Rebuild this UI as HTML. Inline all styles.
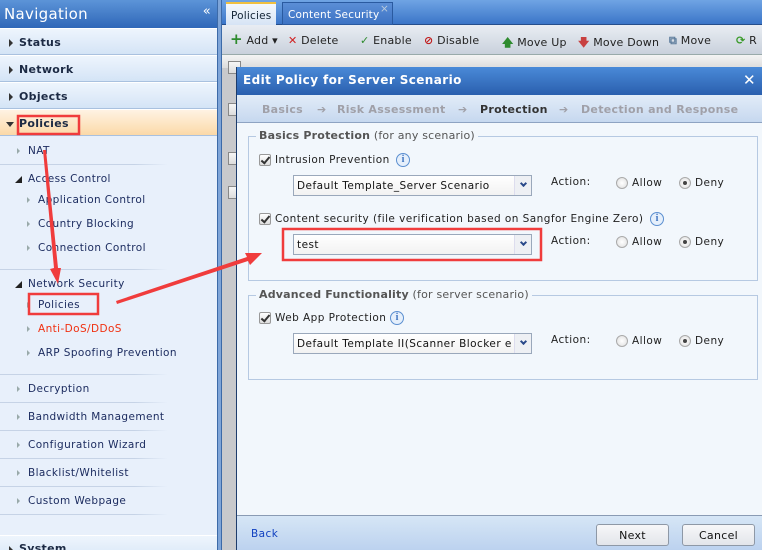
<!DOCTYPE html>
<html><head><meta charset="utf-8">
<style>
*{box-sizing:border-box;margin:0;padding:0}
html,body{width:762px;height:550px;overflow:hidden}
body{position:relative;font-family:"DejaVu Sans","Liberation Sans",sans-serif;font-size:10.5px;color:#1a1a3a;background:#c8c9cc}
.abs{position:absolute}
#side{left:0;top:0;width:217px;height:550px;background:#e8f0fb;overflow:hidden}
#navh{left:0;top:0;width:217px;height:28px;background:linear-gradient(#5c94d8,#2f67b8);color:#fff;font-size:15px;padding:5px 0 0 4px;letter-spacing:0.3px}
.grp{position:absolute;left:0;width:217px;height:27px;background:linear-gradient(#eef5fd,#d4e4f6);border-top:1px solid #fff;border-bottom:1px solid #a9c1df;font-weight:bold;font-size:11px;padding:7px 0 0 19px;color:#1c2a44;letter-spacing:0.3px}
.grp:before{content:"";position:absolute;left:9px;top:10px;border-left:4px solid #333;border-top:4px solid transparent;border-bottom:4px solid transparent}
.grp.open{background:linear-gradient(#fff3e3,#fbd9a8)}
.grp.open:before{left:6px;top:12px;border-top:5px solid #333;border-left:4px solid transparent;border-right:4px solid transparent;border-bottom:0}
.it{position:absolute;font-size:10.5px;color:#1a2a5e;letter-spacing:0.4px;white-space:nowrap}
.it.a:before{content:"";position:absolute;left:-11px;top:3px;border-left:3px solid #9aa;border-top:3px solid transparent;border-bottom:3px solid transparent}
.it.t:before{content:"";position:absolute;left:-13px;top:3px;border-right:7px solid #222;border-top:7px solid transparent}
.sep{position:absolute;left:0;width:168px;height:1px;background:linear-gradient(90deg,#c6d3e6,#c6d3e6 80%,rgba(198,211,230,0))}
#vbar{left:217px;top:0;width:5px;height:550px;background:#7fa5d8;border-left:1px solid #3c6aa8;border-right:1px solid #3c6aa8}
#tabs{left:222px;top:0;width:540px;height:25px;background:linear-gradient(#6fa4e4,#3b75c8);border-bottom:1px solid #254e8c}
.tab{position:absolute;top:2px;height:23px;padding:6px 5px 0;font-size:10.5px;letter-spacing:0.2px;white-space:nowrap}
#tool{left:222px;top:25px;width:540px;height:30px;background:linear-gradient(#e9edf3,#c9d1dc);border-bottom:1px solid #9aa}
.tb{position:absolute;top:9px;font-size:11px;color:#222;letter-spacing:0.2px;white-space:nowrap}
#gh{left:222px;top:55px;width:540px;height:13px;background:linear-gradient(#f4f4f4,#dcdcdc)}
.cb{position:absolute;width:13px;height:13px;border:1px solid #888;background:linear-gradient(#f5f5f5,#ddd)}
#dlg{left:236px;top:67px;width:526px;height:483px;background:#f2f7fc;border-left:1px solid #1d3c6c}
#dt{left:0;top:0;width:526px;height:28px;background:linear-gradient(#4a8ad8,#2a5fae);color:#fff;font-weight:bold;font-size:12px;padding:6px 0 0 6px;letter-spacing:0.4px}
#steps{left:0;top:28px;width:526px;height:28px;background:linear-gradient(#e2ecf8,#c6d8ef);border-bottom:1px solid #8ea3c2;font-weight:bold;font-size:11px;color:#a0a0a8;letter-spacing:0.3px}
#steps span{position:absolute;top:8px;white-space:nowrap}
fieldset{position:absolute;border:1px solid #b6c9e2}
.lg{position:absolute;background:#f2f7fc;padding:0 3px;font-size:11px;color:#555;letter-spacing:0.2px;white-space:nowrap}
.chk{position:absolute;width:12px;height:12px;border:1px solid #999;background:linear-gradient(#fff,#ddd);border-radius:2px}
.chk:after{content:"";position:absolute;left:3px;top:0px;width:3px;height:7px;border-right:2px solid #333;border-bottom:2px solid #333;transform:rotate(40deg)}
.lbl{position:absolute;font-size:10.5px;color:#222;letter-spacing:0.45px;white-space:nowrap}
.info{position:absolute;width:14px;height:14px;border-radius:50%;border:1px solid #5b8fd0;background:#e5effb;color:#3f74c0;font-size:10px;font-weight:bold;text-align:center;line-height:12px;font-family:"Liberation Serif",serif}
.sel{position:absolute;width:239px;height:21px;border:1px solid #9aa8bb;background:linear-gradient(#fff,#f2f2f2);font-size:10.5px;padding:4px 0 0 3px;letter-spacing:0.45px;color:#111;overflow:hidden;white-space:nowrap}
.sel:after{content:"";position:absolute;right:0;top:0;width:16px;height:19px;background:#eef0f4;border-left:1px solid #dde}
.sel i{position:absolute;right:5px;top:5px;width:5px;height:5px;border-right:2px solid #2a4a8a;border-bottom:2px solid #2a4a8a;transform:rotate(45deg);z-index:2}
.rad{position:absolute;width:12px;height:12px;border-radius:50%;border:1px solid #aaa;background:radial-gradient(#fff,#ddd)}
.rad.on:after{content:"";position:absolute;left:3px;top:3px;width:4px;height:4px;border-radius:50%;background:#444}
#foot{left:0;top:448px;width:526px;height:35px;background:linear-gradient(#d6e6f6,#bcd2ef);border-top:1px solid #8a9bb4}
.btn{position:absolute;top:8px;width:73px;height:22px;border:1px solid #8e98a6;border-radius:3px;background:linear-gradient(#f7f7f9,#e3e5ea);font-size:11px;text-align:center;padding-top:4px;color:#111;letter-spacing:0.3px}
</style></head><body>
<div id="side" class="abs">
<div id="navh" class="abs">Navigation<span style="position:absolute;right:6px;top:4px;font-size:13px">«</span></div>
<div class="grp" style="top:28px">Status</div>
<div class="grp" style="top:55px">Network</div>
<div class="grp" style="top:82px">Objects</div>
<div class="grp open" style="top:109px">Policies</div>
<div class="it a" style="left:28px;top:145px">NAT</div>
<div class="sep" style="top:164px"></div>
<div class="it t" style="left:28px;top:173px">Access Control</div>
<div class="it a" style="left:38px;top:194px">Application Control</div>
<div class="it a" style="left:38px;top:218px">Country Blocking</div>
<div class="it a" style="left:38px;top:242px">Connection Control</div>
<div class="sep" style="top:269px"></div>
<div class="it t" style="left:28px;top:278px">Network Security</div>
<div class="it a" style="left:38px;top:299px">Policies</div>
<div class="it a" style="left:38px;top:323px;color:#f03010">Anti-DoS/DDoS</div>
<div class="it a" style="left:38px;top:347px">ARP Spoofing Prevention</div>
<div class="sep" style="top:374px"></div>
<div class="it a" style="left:28px;top:383px">Decryption</div>
<div class="sep" style="top:402px"></div>
<div class="it a" style="left:28px;top:411px">Bandwidth Management</div>
<div class="sep" style="top:430px"></div>
<div class="it a" style="left:28px;top:439px">Configuration Wizard</div>
<div class="sep" style="top:458px"></div>
<div class="it a" style="left:28px;top:467px">Blacklist/Whitelist</div>
<div class="sep" style="top:486px"></div>
<div class="it a" style="left:28px;top:495px">Custom Webpage</div>
<div class="sep" style="top:514px"></div>
<div class="grp" style="top:535px;height:30px;padding-top:6px">System</div>
</div>
<div id="vbar" class="abs"></div>
<div id="tabs" class="abs">
<div class="tab" style="left:4px;width:50px;background:linear-gradient(#f4f8fd,#d6e4f5);border-top:2px solid #f0c040;color:#123">Policies</div>
<div class="tab" style="left:60px;width:111px;background:linear-gradient(#5b8ed6,#3d73c4);border:1px solid #2a5aa0;color:#fff">Content Security<span style="position:absolute;right:3px;top:0px;color:#bcd">×</span></div>
</div>
<div id="tool" class="abs">
<div class="tb" style="left:8px"><b style="color:#2e8b2e;font-size:15px;line-height:10px">+</b> Add ▾</div>
<div class="tb" style="left:66px"><b style="color:#d02020">✕</b> Delete</div>
<div class="tb" style="left:138px"><b style="color:#2e8b2e">✓</b> Enable</div>
<div class="tb" style="left:202px"><b style="color:#c01818">⊘</b> Disable</div>
<div class="tb" style="left:280px"><b style="color:#2e8b2e">🡅</b> Move Up</div>
<div class="tb" style="left:356px"><b style="color:#c84040">🡇</b> Move Down</div>
<div class="tb" style="left:447px"><b style="color:#5a7a9a">⧉</b> Move</div>
<div class="tb" style="left:514px"><b style="color:#3a9a2a">⟳</b> R</div>
</div>
<div id="gh" class="abs"></div>
<div class="cb" style="left:228px;top:61px"></div>
<div class="cb" style="left:228px;top:103px"></div>
<div class="cb" style="left:228px;top:152px"></div>
<div class="cb" style="left:228px;top:186px"></div>
<div id="dlg" class="abs">
<div id="dt" class="abs">Edit Policy for Server Scenario<span style="position:absolute;right:7px;top:4px;font-size:15px">✕</span></div>
<div id="steps" class="abs">
<span style="left:25px">Basics</span><span style="left:80px">➔</span>
<span style="left:100px">Risk Assessment</span><span style="left:221px">➔</span>
<span style="left:243px;color:#333">Protection</span><span style="left:322px">➔</span>
<span style="left:344px">Detection and Response</span>
</div>
<fieldset style="left:11px;top:69px;width:510px;height:145px"></fieldset>
<div class="lg" style="left:19px;top:62px"><b>Basics Protection</b> (for any scenario)</div>
<div class="chk" style="left:22px;top:87px"></div>
<div class="lbl" style="left:38px;top:87px">Intrusion Prevention</div>
<div class="info" style="left:159px;top:86px">i</div>
<div class="sel" style="left:56px;top:108px">Default Template_Server Scenario<i></i></div>
<div class="lbl" style="left:314px;top:109px">Action:</div>
<div class="rad" style="left:379px;top:110px"></div><div class="lbl" style="left:395px;top:110px">Allow</div>
<div class="rad on" style="left:442px;top:110px"></div><div class="lbl" style="left:458px;top:110px">Deny</div>
<div class="chk" style="left:22px;top:146px"></div>
<div class="lbl" style="left:38px;top:146px">Content security (file verification based on Sangfor Engine Zero)</div>
<div class="info" style="left:413px;top:145px">i</div>
<div class="sel" style="left:56px;top:167px">test<i></i></div>
<div class="lbl" style="left:314px;top:168px">Action:</div>
<div class="rad" style="left:379px;top:169px"></div><div class="lbl" style="left:395px;top:169px">Allow</div>
<div class="rad on" style="left:442px;top:169px"></div><div class="lbl" style="left:458px;top:169px">Deny</div>
<fieldset style="left:11px;top:228px;width:510px;height:85px"></fieldset>
<div class="lg" style="left:19px;top:221px"><b>Advanced Functionality</b> (for server scenario)</div>
<div class="chk" style="left:22px;top:245px"></div>
<div class="lbl" style="left:38px;top:245px">Web App Protection</div>
<div class="info" style="left:153px;top:244px">i</div>
<div class="sel" style="left:56px;top:266px">Default Template II(Scanner Blocker e<i></i></div>
<div class="lbl" style="left:314px;top:267px">Action:</div>
<div class="rad" style="left:379px;top:268px"></div><div class="lbl" style="left:395px;top:268px">Allow</div>
<div class="rad on" style="left:442px;top:268px"></div><div class="lbl" style="left:458px;top:268px">Deny</div>
<div id="foot" class="abs">
<div class="lbl" style="left:14px;top:12px;color:#1040c0">Back</div>
<div class="btn" style="left:359px">Next</div>
<div class="btn" style="left:445px">Cancel</div>
</div>
</div>
<svg class="abs" style="left:0;top:0" width="762" height="550">
<g fill="none" stroke="#f03c3c" stroke-width="2.5">
<rect x="18" y="116" width="61" height="18"/>
<rect x="29" y="294" width="69" height="20"/>
<rect x="283" y="229" width="258" height="31"/>
</g>
<g fill="#f03c3c">
<path d="M43 150 L46 150 L58 268 L61 268 L58 284 L50 269 L54 268 Z"/>
<path d="M117 304 L116 301 L247 257 L245 253 L262 253 L250 265 L248 261 Z"/>
</g>
</svg>
</body></html>
